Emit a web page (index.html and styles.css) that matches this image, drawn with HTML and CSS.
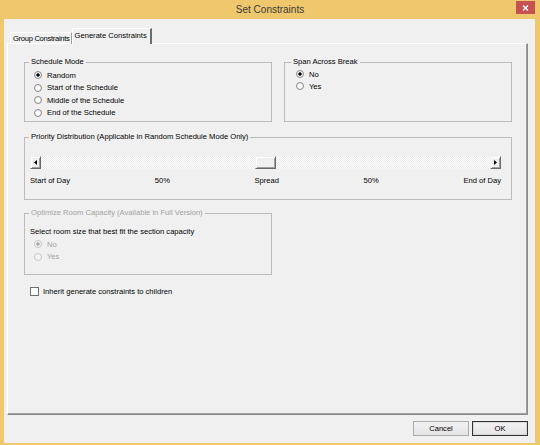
FILE: index.html
```html
<!DOCTYPE html>
<html lang="en">
<head>
    <meta charset="UTF-8">
    <meta name="viewport" content="width=device-width, initial-scale=1.0">
    <title>Set Constraints</title>
    <link rel="stylesheet" href="styles.css">
</head>
<body>

<div class="window">

    <!-- Barra de título -->
    <div class="titlebar">
        <span class="title">Set Constraints</span>
        <span class="close">
            <svg width="7" height="6" viewBox="0 0 7 6"><path d="M1 0.5 L6 5.5 M6 0.5 L1 5.5" stroke="#fff" stroke-width="1.4" fill="none"/></svg>
        </span>
    </div>

    <div class="client">

        <!-- Abas -->
        <div class="tabs">
            <div class="tab">Group Constraints</div>
            <div class="tab tab-active">Generate Constraints</div>
        </div>

        <div class="panel">

            <div class="row">
                <fieldset class="group group-mode">
                    <legend>Schedule Mode</legend>
                    <div class="option"><span class="radio checked"></span>Random</div>
                    <div class="option"><span class="radio"></span>Start of the Schedule</div>
                    <div class="option"><span class="radio"></span>Middle of the Schedule</div>
                    <div class="option"><span class="radio"></span>End of the Schedule</div>
                </fieldset>

                <fieldset class="group group-span">
                    <legend>Span Across Break</legend>
                    <div class="option option-small"><span class="radio checked"></span>No</div>
                    <div class="option option-small"><span class="radio"></span>Yes</div>
                </fieldset>
            </div>

            <fieldset class="group group-priority">
                <legend>Priority Distribution (Applicable in Random Schedule Mode Only)</legend>
                <div class="scrollbar">
                    <span class="scroll-btn">
                        <svg width="3" height="5" viewBox="0 0 3 5"><path d="M3 0 L0 2.5 L3 5 Z" fill="#000"/></svg>
                    </span>
                    <div class="scroll-track">
                        <span class="scroll-thumb"></span>
                    </div>
                    <span class="scroll-btn">
                        <svg width="3" height="5" viewBox="0 0 3 5"><path d="M0 0 L3 2.5 L0 5 Z" fill="#000"/></svg>
                    </span>
                </div>
                <div class="scale">
                    <span>Start of Day</span>
                    <span>50%</span>
                    <span>Spread</span>
                    <span>50%</span>
                    <span>End of Day</span>
                </div>
            </fieldset>

            <!-- Desabilitado na versão de avaliação -->
            <fieldset class="group group-capacity disabled">
                <legend>Optimize Room Capacity (Available in Full Version)</legend>
                <div class="hint">Select room size that best fit the section capacity</div>
                <div class="option"><span class="radio checked"></span>No</div>
                <div class="option"><span class="radio"></span>Yes</div>
            </fieldset>

            <div class="check-row">
                <span class="checkbox"></span>Inherit generate constraints to children
            </div>

        </div>

        <!-- Botões -->
        <div class="buttons">
            <button class="button">Cancel</button>
            <button class="button button-default">OK</button>
        </div>

    </div>
</div>

</body>
</html>
```

FILE: styles.css
```css
* {
    box-sizing: border-box;
}

body {
    margin: 0;
    font-family: "Liberation Sans", Arial, sans-serif;
    font-size: 7.6px;
    color: #000;
}

.window {
    width: 540px;
    height: 445px;
    background-color: #efc86e;
    display: flex;
    flex-direction: column;
}

/* Barra de título */
.titlebar {
    height: 19px;
    display: grid;
    grid-template-columns: 1fr auto 1fr;
    align-items: start;
}

.title {
    grid-column: 2;
    font-size: 10px;
    line-height: 19px;
    color: #3a3a3a;
}

.close {
    grid-column: 3;
    justify-self: end;
    width: 19px;
    height: 13px;
    margin: 1px 5px 0 0;
    background-color: #c75050;
    display: flex;
    align-items: center;
    justify-content: center;
}

.client {
    flex: 1;
    margin: 0 5px 2px 4px;
    padding-top: 9px;
    background-color: #f0f0f0;
    display: flex;
    flex-direction: column;
}

/* Abas */
.tabs {
    display: flex;
    align-items: flex-end;
    margin: 0 0 -1px 6px;
    position: relative;
    z-index: 1;
}

.tab {
    height: 12px;
    padding: 0 1px 0 2px;
    border-top: 1px solid #fff;
    border-left: 1px solid #fff;
    border-right: 1px solid #a0a0a0;
    line-height: 11px;
    letter-spacing: -0.3px;
    white-space: nowrap;
}

.tab-active {
    height: 16px;
    padding: 0 3px 0 2px;
    border-right: 2px solid #6d6d6d;
    background-color: #f0f0f0;
    line-height: 13px;
    letter-spacing: 0;
}

.panel {
    flex: 1;
    margin: 0 7px 0 3px;
    padding: 13px 15px 0 16px;
    border: 1px solid;
    border-color: #fff #8a8a8a #8a8a8a #fff;
    box-shadow: inset -1px -1px 0 #a0a0a0;
}

.row {
    display: flex;
    gap: 12px;
}

/* Caixas de grupo */
.group {
    margin: 0;
    min-width: 0;
    border: 1px solid #bcbcbc;
}

.group legend {
    padding: 0 2px;
    margin-left: -5px;
    line-height: 10px;
}

.group-mode {
    width: 248px;
    padding: 2px 0 2px 9px;
}

.group-span {
    width: 228px;
    padding: 1px 0 0 11px;
}

.group-priority {
    margin-top: 10px;
    padding: 14px 10px 13px 5px;
}

.group-priority legend {
    margin-left: -1px;
}

.group-capacity {
    width: 248px;
    margin-top: 8px;
    padding: 8px 0 11px 9px;
}

.option {
    display: flex;
    align-items: center;
    gap: 5px;
    height: 12.5px;
}

.option-small {
    height: 12px;
}

.radio {
    width: 8px;
    height: 8px;
    border: 1px solid #8c8c8c;
    border-radius: 50%;
    background: radial-gradient(circle, #fff 0 30%, #dedede 100%);
}

.radio.checked {
    background: radial-gradient(circle, #000 0 1.4px, transparent 1.9px), radial-gradient(circle, #fff 0 30%, #dedede 100%);
}

.disabled {
    color: #a3a3a3;
}

.disabled .radio {
    border-color: #c6c6c6;
    background: #f4f4f4;
}

.disabled .radio.checked {
    background: radial-gradient(circle, #a8a8a8 0 1.4px, transparent 1.9px), #f4f4f4;
}

.hint {
    margin-left: -4px;
    line-height: 12px;
    color: #000;
}

/* Barra de rolagem */
.scrollbar {
    display: flex;
    height: 13px;
    background: repeating-conic-gradient(#fff 0 25%, #ebebeb 0 50%) 0 0 / 2px 2px;
}

.scroll-btn {
    width: 11px;
    border: 1px solid;
    border-color: #f0f0f0 #696969 #696969 #f0f0f0;
    box-shadow: inset 1px 1px 0 #fff, inset -1px -1px 0 #a0a0a0;
    background-color: #f0f0f0;
    display: flex;
    align-items: center;
    justify-content: center;
}

.scroll-track {
    flex: 1;
    display: flex;
    justify-content: center;
}

.scroll-thumb {
    width: 21px;
    border: 1px solid;
    border-color: #f0f0f0 #696969 #696969 #f0f0f0;
    box-shadow: inset 1px 1px 0 #fff, inset -1px -1px 0 #a0a0a0;
    background-color: #f0f0f0;
}

.scale {
    display: flex;
    justify-content: space-between;
    margin-top: 6px;
    line-height: 11px;
}

.check-row {
    display: flex;
    align-items: center;
    gap: 4px;
    height: 12px;
    margin: 10px 0 0 6px;
}

.checkbox {
    width: 9px;
    height: 9px;
    border: 1px solid #707070;
    background-color: #fff;
}

/* Botões */
.buttons {
    display: flex;
    justify-content: flex-end;
    gap: 3px;
    margin: 6px 7px 7px 0;
}

.button {
    width: 56px;
    height: 15px;
    padding: 0;
    font: inherit;
    color: #000;
    border: 1px solid #acacac;
    background: linear-gradient(#f2f2f2, #e4e4e4);
}

.button-default {
    border-color: #333;
    box-shadow: inset 0 0 0 1px #d8d8d8;
}
```
